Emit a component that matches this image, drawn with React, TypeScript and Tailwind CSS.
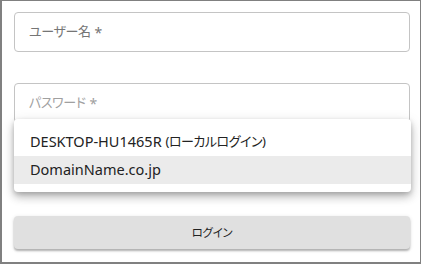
import React from "react";

export default function App() {
  const font = { fontFamily: '"Noto Sans", "Noto Sans CJK JP", sans-serif' };
  return (
    <div
      className="w-[421px] h-[264px] bg-white border-t border-r border-l-2 border-b-2 border-[#808080] box-border relative [font-feature-settings:'palt']"
      style={font}
    >
      <div className="pl-[12px] pr-[10px] pt-[11px] flex flex-col">
        <div className="h-[40px] border border-[#c4c4c4] rounded-[4px] flex items-center pl-[14px] text-[14px] text-[#757575]">
          <span className="text-[13px] tracking-[-0.4px]">ユーザー名</span>
          <span className="ml-[4px]">*</span>
        </div>
        <div className="mt-[31px] h-[40px] border border-[#c4c4c4] rounded-[4px] flex items-center pl-[14px] text-[14px] text-[#a0a0a0]">
          <span className="text-[13px] tracking-[-0.4px]">パスワード</span>
          <span className="ml-[4px]">*</span>
        </div>
        <button className="mt-[93px] h-[33px] w-full bg-[#e0e0e0] rounded-[4px] shadow-[0_2px_2px_rgba(0,0,0,0.25),0_1px_4px_rgba(0,0,0,0.12)] text-[11.5px] tracking-[-0.3px] text-[#222]">
          ログイン
        </button>
      </div>
      <div className="absolute left-[12px] top-[118px] w-[397px] bg-white rounded-[4px] py-[8px] shadow-[0_5px_8px_rgba(0,0,0,0.2),0_3px_14px_rgba(0,0,0,0.12),0_2px_4px_rgba(0,0,0,0.14)]">
        <div className="h-[29px] flex items-center pl-[16px] text-[14.5px] text-[#222]">
          <span>DESKTOP-HU1465R&nbsp;</span>
          <span className="text-[13px] tracking-[-0.5px]">(ローカルログイン)</span>
        </div>
        <div className="h-[28px] flex items-center pl-[16px] text-[14.5px] text-[#222] bg-[#ebebeb]">
          DomainName.co.jp
        </div>
      </div>
    </div>
  );
}
